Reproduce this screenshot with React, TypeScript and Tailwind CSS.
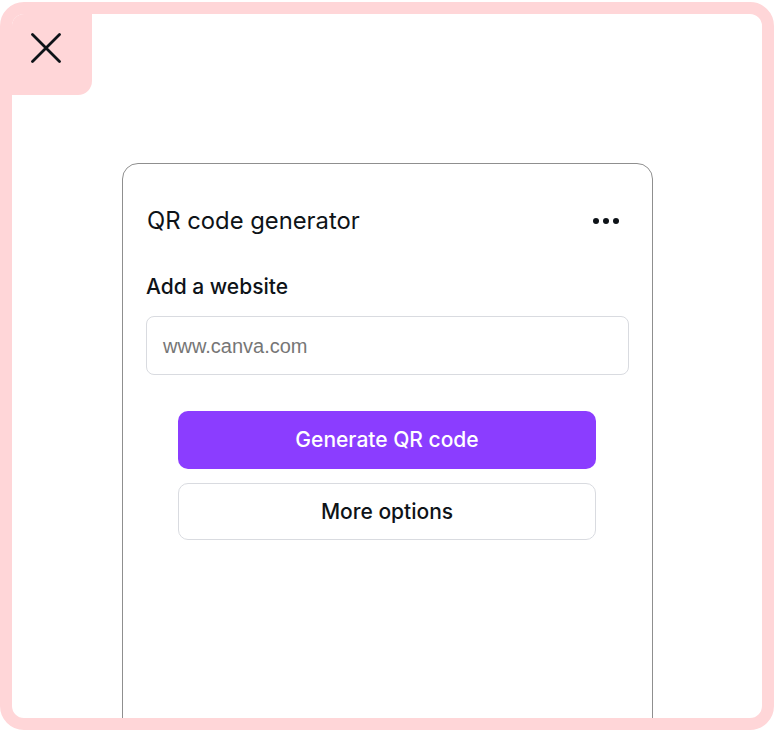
import type { FC } from "react";

const CloseTab: FC = () => (
  <div className="absolute left-0 top-0 w-[80px] h-[81px] bg-[#ffd6d8] rounded-br-[14px]">
    <button className="absolute left-[19px] top-[19px] w-[30px] h-[30px] flex items-center justify-center">
      <svg width="30" height="30" viewBox="0 0 30 30" fill="none">
        <path
          d="M1.5 1.5 L28.5 28.5 M28.5 1.5 L1.5 28.5"
          stroke="#0e1318"
          strokeWidth="2.8"
          strokeLinecap="round"
        />
      </svg>
    </button>
  </div>
);

const QrCard: FC = () => (
  <div className="ml-[110px] mt-[149px] w-[531px] h-[700px] border border-[#8f8f8f] rounded-[16px] bg-white">
    {/* Header */}
    <div className="flex items-center justify-between pl-6 pr-[33px] pt-[41px] h-[73px]">
      <h2 className="text-[23.8px] leading-[32px] text-[#0e1318] font-normal">
        QR code generator
      </h2>
      <div className="flex items-center gap-[4px]">
        <span className="w-[6px] h-[6px] rounded-full bg-[#0e1318]" />
        <span className="w-[6px] h-[6px] rounded-full bg-[#0e1318]" />
        <span className="w-[6px] h-[6px] rounded-full bg-[#0e1318]" />
      </div>
    </div>

    {/* Website field */}
    <div className="px-[23px] mt-[36px]">
      <label className="block text-[21px] leading-[28px] font-medium text-[#0e1318]">
        Add a website
      </label>
      <div className="mt-[15px] h-[59px] border border-[#d9dbe0] rounded-[8px] flex items-center pl-4">
        <span className="font-['Liberation_Sans',Arial,sans-serif] text-[20px] text-[#767676]">
          www.canva.com
        </span>
      </div>
    </div>

    {/* Actions */}
    <div className="mt-[36px] pl-[55px] flex flex-col items-start gap-[14px]">
      <button className="w-[418px] h-[58px] rounded-[10px] bg-[#8b3dff] text-white text-[21px] font-medium">
        Generate QR code
      </button>
      <button className="w-[418px] h-[57px] rounded-[10px] border border-[#d9dbe0] bg-white text-[#0e1318] text-[21px] font-medium">
        More options
      </button>
    </div>
  </div>
);

export default function App() {
  return (
    <div className="w-[775px] h-[730px] bg-white pt-[2px] font-['Inter','Noto_Sans',sans-serif]">
      <div className="relative w-[774px] h-[728px] border-[12px] border-[#ffd6d8] rounded-[24px] overflow-hidden bg-white">
        <CloseTab />
        <QrCard />
      </div>
    </div>
  );
}
